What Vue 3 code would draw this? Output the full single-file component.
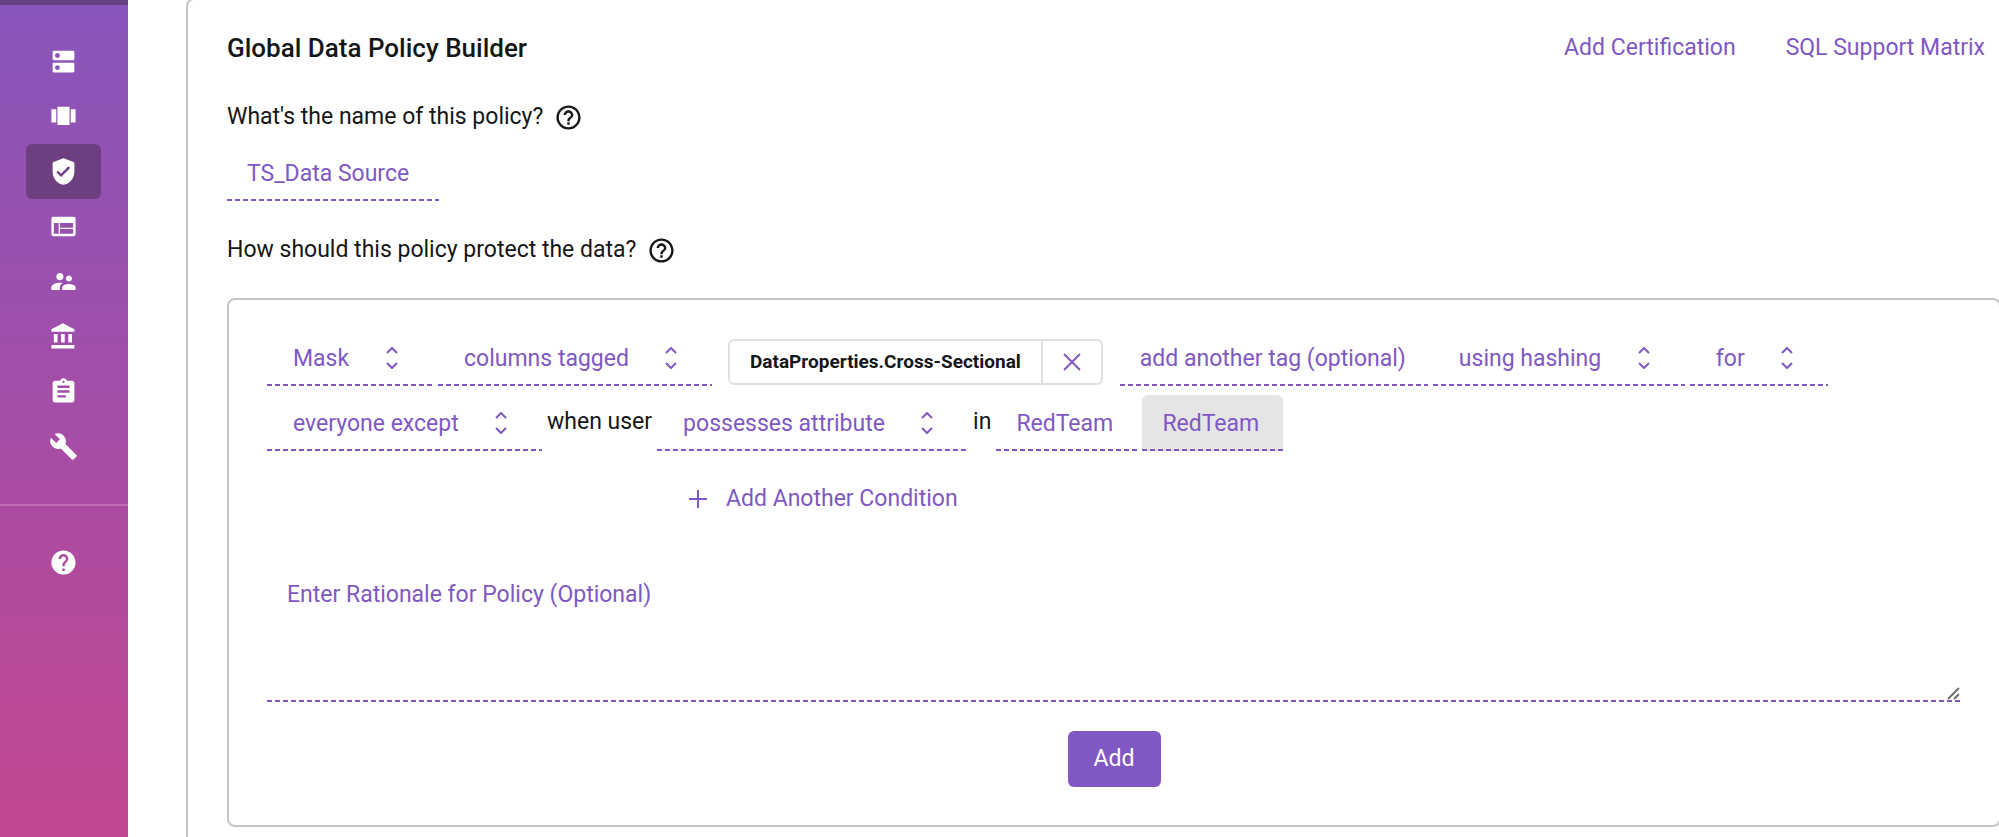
<script setup>
import { ref } from 'vue'

const navItems = [
  {
    label: 'Data Sources',
    path: 'M20 13H4c-.55 0-1 .45-1 1v6c0 .55.45 1 1 1h16c.55 0 1-.45 1-1v-6c0-.55-.45-1-1-1zM7 19c-1.100 0-2-.9-2-2s.9-2 2-2 2 .9 2 2-.9 2-2 2zM20 3H4c-.55 0-1 .45-1 1v6c0 .55.45 1 1 1h16c.55 0 1-.45 1-1V4c0-.55-.45-1-1-1zM7 9c-1.100 0-2-.9-2-2s.9-2 2-2 2 .9 2 2-.9 2-2 2z'
  },
  { label: 'Projects', path: 'M7 19h10V4H7v15zm-5-2h4V6H2v11zM18 6v11h4V6h-4z' },
  {
    label: 'Policies',
    active: true,
    path: 'M12 1L3.700 4.200Q3 4.500 3 5.400V12c0 5.600 3.200 9.100 7.200 10.600q1.800.8 3.600 0C17.800 21.100 21 17.600 21 12V5.400Q21 4.500 20.300 4.200zM10 16.600l-3.900-3.900 1.400-1.400 2.500 2.500 6.100-6.100 1.400 1.400z'
  },
  {
    label: 'Workspaces',
    path: 'M3.500 4h17A1.500 1.500 0 0 1 22 5.500v13a1.500 1.500 0 0 1-1.500 1.500h-17A1.500 1.500 0 0 1 2 18.500v-13A1.500 1.500 0 0 1 3.500 4zM4 9v9h4V9zM9 9v4h11V9zM9 14v4h11v-4z'
  },
  {
    label: 'People',
    path: 'M16.500 12c1.380 0 2.490-1.120 2.490-2.500S17.880 7 16.500 7C15.120 7 14 8.120 14 9.500s1.120 2.500 2.500 2.500zM9 11c1.660 0 2.990-1.340 2.990-3S10.660 5 9 5C7.340 5 6 6.340 6 8s1.340 3 3 3zm7.500 3c-1.830 0-5.500.92-5.500 2.750V19h11v-2.250c0-1.830-3.670-2.750-5.500-2.750zM9 13c-2.330 0-7 1.170-7 3.500V19h7v-2.250c0-.85.33-2.340 2.370-3.470C10.500 13.100 9.660 13 9 13z'
  },
  { label: 'Governance', path: 'M4 10v7h3v-7H4zm6 0v7h3v-7h-3zM2 22h19v-3H2v3zm14-12v7h3v-7h-3zm-4.500-9L2 6v2h19V6l-9.500-5z' },
  {
    label: 'Audit',
    path: 'M19 3h-4.180C14.400 1.840 13.300 1 12 1c-1.300 0-2.400.84-2.820 2H5c-1.100 0-2 .9-2 2v14c0 1.100.9 2 2 2h14c1.100 0 2-.9 2-2V5c0-1.100-.9-2-2-2zm-7 0c.55 0 1 .45 1 1s-.45 1-1 1-1-.45-1-1 .45-1 1-1zm2 14H7v-2h7v2zm3-4H7v-2h10v2zm0-4H7V7h10v2z'
  },
  {
    label: 'Settings',
    path: 'M22.700 19l-9.100-9.100c.9-2.300.4-5-1.500-6.900-2-2-5-2.400-7.400-1.300L9 6 6 9 1.600 4.700C.4 7.100.9 10.100 2.900 12.100c1.900 1.900 4.600 2.400 6.900 1.500l9.100 9.100c.4.4 1 .4 1.400 0l2.300-2.300c.5-.4.5-1.100.1-1.400z'
  }
]

const helpFilled =
  'M12 2C6.480 2 2 6.480 2 12s4.480 10 10 10 10-4.480 10-10S17.520 2 12 2zm1 17h-2v-2h2v2zm2.070-7.750l-.9.92C13.450 12.900 13 13.500 13 15h-2v-.5c0-1.100.45-2.100 1.170-2.830l1.240-1.260c.37-.36.59-.86.59-1.410 0-1.100-.9-2-2-2s-2 .9-2 2H8c0-2.210 1.790-4 4-4s4 1.790 4 4c0 .88-.36 1.680-.93 2.250z'
const helpOutline =
  'M11 18h2v-2h-2v2zm1-16C6.480 2 2 6.480 2 12s4.480 10 10 10 10-4.480 10-10S17.520 2 12 2zm0 18c-4.410 0-8-3.590-8-8s3.590-8 8-8 8 3.590 8 8-3.590 8-8 8zm0-14c-2.210 0-4 1.790-4 4h2c0-1.100.9-2 2-2s2 .9 2 2c0 2-3 1.750-3 5h2c0-2.250 3-2.500 3-5 0-2.210-1.790-4-4-4z'

const policyName = ref('TS_Data Source')
const tags = ref(['DataProperties.Cross-Sectional'])
const newTag = ref('')
const attributeName = ref('RedTeam')
const attributeValue = ref('RedTeam')
const rationale = ref('')
const removeTag = (tag) => {
  tags.value = tags.value.filter((t) => t !== tag)
}
</script>

<template>
  <div class="app">
    <nav class="sidebar" aria-label="Main">
      <div class="nav-group">
        <a
          v-for="item in navItems"
          :key="item.label"
          href="#"
          class="nav-item"
          :class="{ active: item.active }"
          :aria-label="item.label"
        >
          <svg viewBox="0 0 24 24" aria-hidden="true"><path :d="item.path" fill-rule="evenodd" /></svg>
        </a>
      </div>
      <div class="nav-group nav-footer">
        <a href="#" class="nav-item" aria-label="Help">
          <svg viewBox="0 0 24 24" aria-hidden="true"><path :d="helpFilled" /></svg>
        </a>
      </div>
    </nav>

    <main class="content">
      <section class="builder">
        <header class="builder-head">
          <h1>Global Data Policy Builder</h1>
          <div class="head-links">
            <a href="#">Add Certification</a>
            <a href="#">SQL Support Matrix</a>
          </div>
        </header>

        <div class="question">
          <label for="policy-name">What's the name of this policy?</label>
          <button type="button" class="help" aria-label="About the policy name">
            <svg viewBox="0 0 24 24" aria-hidden="true"><path :d="helpOutline" /></svg>
          </button>
        </div>
        <input id="policy-name" v-model="policyName" class="field name-field" type="text" />

        <div class="question protect">
          <h2>How should this policy protect the data?</h2>
          <button type="button" class="help" aria-label="About data protection">
            <svg viewBox="0 0 24 24" aria-hidden="true"><path :d="helpOutline" /></svg>
          </button>
        </div>

        <form class="rule" @submit.prevent>
          <div class="sentence">
            <span class="picker">
              <select class="field" aria-label="Action"><option>Mask</option></select>
              <svg viewBox="0 0 12 22" aria-hidden="true"><path d="M1 6l5-5 5 5M1 16l5 5 5-5" /></svg>
            </span>
            <span class="picker">
              <select class="field" aria-label="Columns"><option>columns tagged</option></select>
              <svg viewBox="0 0 12 22" aria-hidden="true"><path d="M1 6l5-5 5 5M1 16l5 5 5-5" /></svg>
            </span>
            <span v-for="tag in tags" :key="tag" class="chip">
              <span class="chip-text">{{ tag }}</span>
              <button type="button" :aria-label="'Remove ' + tag" @click="removeTag(tag)">
                <svg viewBox="0 0 18 18" aria-hidden="true"><path d="M1 1l16 16M17 1L1 17" /></svg>
              </button>
            </span>
            <input v-model="newTag" class="field tag-field" type="text" aria-label="Another tag" placeholder="add another tag (optional)" />
            <span class="picker">
              <select class="field" aria-label="Masking method"><option>using hashing</option></select>
              <svg viewBox="0 0 12 22" aria-hidden="true"><path d="M1 6l5-5 5 5M1 16l5 5 5-5" /></svg>
            </span>
            <span class="picker">
              <select class="field" aria-label="Applies"><option>for</option></select>
              <svg viewBox="0 0 12 22" aria-hidden="true"><path d="M1 6l5-5 5 5M1 16l5 5 5-5" /></svg>
            </span>
            <span class="picker">
              <select class="field" aria-label="Audience"><option>everyone except</option></select>
              <svg viewBox="0 0 12 22" aria-hidden="true"><path d="M1 6l5-5 5 5M1 16l5 5 5-5" /></svg>
            </span>
            <span class="word">when user</span>
            <span class="picker">
              <select class="field" aria-label="Condition"><option>possesses attribute</option></select>
              <svg viewBox="0 0 12 22" aria-hidden="true"><path d="M1 6l5-5 5 5M1 16l5 5 5-5" /></svg>
            </span>
            <span class="word">in</span>
            <input v-model="attributeName" class="field value-field" type="text" aria-label="Attribute name" />
            <input v-model="attributeValue" class="field value-field current" type="text" aria-label="Attribute value" />
          </div>

          <button type="button" class="add-condition">
            <svg viewBox="0 0 18 18" aria-hidden="true"><path d="M9 0v18M0 9h18" /></svg>
            Add Another Condition
          </button>

          <div class="rationale">
            <textarea v-model="rationale" class="field" aria-label="Rationale" placeholder="Enter Rationale for Policy (Optional)"></textarea>
            <svg viewBox="0 0 13 13" aria-hidden="true"><path d="M1 12L12 1M7 12l5-5" /></svg>
          </div>

          <button type="submit" class="submit">Add</button>
        </form>
      </section>
    </main>
  </div>
</template>

<style>
body {
  background: #fff;
}
</style>

<style scoped>
.app {
  --accent: #8058c4;
  --line: #c6c6c6;
  display: flex;
  min-height: 100vh;
  overflow: hidden;
  font-family: Roboto, "Liberation Sans", sans-serif;
  font-size: 23px;
  line-height: 26px;
  color: #151618;
}
.app *,
.app {
  box-sizing: border-box;
}
button,
input,
select,
textarea {
  font: inherit;
  color: inherit;
  margin: 0;
  border: 0;
  padding: 0;
  background: none;
  outline: none;
}
a {
  color: var(--accent);
  text-decoration: none;
}
svg {
  display: block;
  fill: none;
}

.sidebar {
  flex: none;
  width: 128px;
  border-top: 5px solid #66407f;
  background: linear-gradient(#8955bb, #9a50ae 33%, #b04b9e 68%, #c34791);
}
.nav-group {
  display: flex;
  flex-direction: column;
  padding: 29px 27px 30px 26px;
}
.nav-footer {
  border-top: 2px solid #c06cb5;
}
.nav-item {
  display: grid;
  place-items: center;
  height: 55px;
  border-radius: 6px;
}
.nav-item.active {
  background: #6e3f80;
}
.nav-item svg {
  width: 29px;
  height: 29px;
  fill: #fff;
}

.content {
  flex: 1;
  min-width: 0;
  padding-left: 58px;
}
.builder {
  height: calc(100% + 20px);
  margin: -2px -40px -20px 0;
  padding: 33px 36px 0 39px;
  border: 2px solid var(--line);
  border-radius: 8px;
}
.builder-head {
  display: flex;
  justify-content: space-between;
  align-items: center;
  padding-right: 16px;
}
h1 {
  margin: 0;
  font-size: 26px;
  line-height: 30px;
  font-weight: 500;
}
h2 {
  margin: 0;
  font: inherit;
}
.head-links {
  display: flex;
  gap: 50px;
}
.question {
  display: flex;
  align-items: center;
  gap: 11px;
  height: 30px;
  margin-top: 39px;
}
.protect {
  margin-top: 34px;
}
.help svg {
  width: 29px;
  height: 29px;
  fill: #151618;
}

.field {
  display: block;
  height: 56px;
  padding: 3px 20px 2px;
  color: var(--accent);
  background: repeating-linear-gradient(90deg, var(--accent) 0 5px, transparent 5px 8px) left bottom / 100% 2px no-repeat;
}
.field::placeholder {
  color: var(--accent);
  opacity: 1;
}
.name-field {
  width: 212px;
  margin-top: 13px;
}
.tag-field {
  width: 308px;
}
.value-field {
  width: 141px;
}
.current {
  background-color: #e5e5e5;
  border-radius: 6px 6px 0 0;
}

.rule {
  margin-top: 33px;
  padding: 30px 38px 38px;
  border: 2px solid var(--line);
  border-radius: 8px;
}
.sentence {
  display: flex;
  flex-wrap: wrap;
  gap: 9px 5px;
}
.picker {
  position: relative;
}
.picker select {
  appearance: none;
  padding: 4px 83px 2px 26px;
}
.picker svg {
  position: absolute;
  right: 35px;
  top: 17px;
  width: 12px;
  height: 22px;
  stroke: var(--accent);
  stroke-width: 2;
  pointer-events: none;
}
.chip {
  display: flex;
  height: 46px;
  margin: 9px 12px 0 11px;
  border: 2px solid #e0e0e0;
  border-radius: 6px;
  font-size: 19px;
  font-weight: 700;
}
.chip-text {
  padding: 8px 20px;
}
.chip button {
  display: grid;
  place-items: center;
  width: 60px;
  border-left: 2px solid #e0e0e0;
}
.chip svg {
  width: 18px;
  height: 18px;
  stroke: var(--accent);
  stroke-width: 2;
}
.word {
  padding-top: 14px;
}
.add-condition {
  display: flex;
  align-items: center;
  gap: 19px;
  margin: 35px 0 0 422px;
  color: var(--accent);
}
.add-condition svg {
  width: 18px;
  height: 18px;
  stroke: var(--accent);
  stroke-width: 2;
}
.rationale {
  position: relative;
  margin-top: 54px;
}
.rationale textarea {
  width: 100%;
  height: 136px;
  padding-top: 16px;
  resize: none;
}
.rationale svg {
  position: absolute;
  right: 1px;
  bottom: 2px;
  width: 13px;
  height: 13px;
  stroke: #6e6e6e;
  stroke-width: 2;
}
.submit {
  display: block;
  width: 93px;
  height: 56px;
  margin: 29px auto 0;
  border-radius: 6px;
  background: var(--accent);
  color: #fff;
}
</style>
